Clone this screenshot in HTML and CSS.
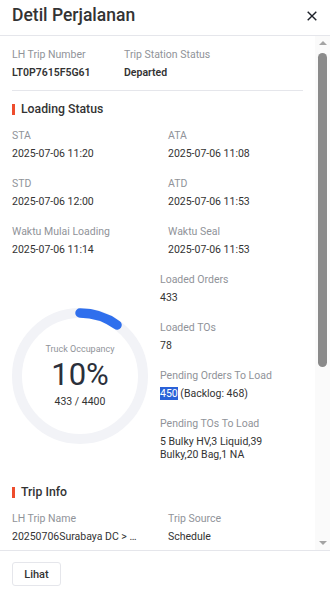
FILE: index.html
```html
<!DOCTYPE html>
<html lang="en">
<head>
  <meta charset="UTF-8">
  <meta name="viewport" content="width=device-width, initial-scale=1.0">
  <title>Detil Perjalanan</title>
  <link rel="stylesheet" href="styles.css">
</head>
<body>

  <div class="drawer">
    <!-- Header -->
    <div class="drawer-header">
      <span class="drawer-title">Detil Perjalanan</span>
      <svg class="close-icon" width="10" height="10" viewBox="0 0 10 10">
        <path d="M0.7 0.7 L9.3 9.3 M9.3 0.7 L0.7 9.3" stroke="#1d2129" stroke-width="1.4" fill="none"/>
      </svg>
    </div>

    <!-- Body with its scrollbar -->
    <div class="drawer-main">
      <div class="drawer-body">
        <div class="trip-top">
          <div class="field first">
            <div class="label">LH Trip Number</div>
            <div class="value bold">LT0P7615F5G61</div>
          </div>
          <div class="field">
            <div class="label">Trip Station Status</div>
            <div class="value bold">Departed</div>
          </div>
        </div>

        <div class="section-title">Loading Status</div>
        <div class="grid">
          <div class="field">
            <div class="label">STA</div>
            <div class="value">2025-07-06 11:20</div>
          </div>
          <div class="field">
            <div class="label">ATA</div>
            <div class="value">2025-07-06 11:08</div>
          </div>
          <div class="field">
            <div class="label">STD</div>
            <div class="value">2025-07-06 12:00</div>
          </div>
          <div class="field">
            <div class="label">ATD</div>
            <div class="value">2025-07-06 11:53</div>
          </div>
          <div class="field">
            <div class="label">Waktu Mulai Loading</div>
            <div class="value">2025-07-06 11:14</div>
          </div>
          <div class="field">
            <div class="label">Waktu Seal</div>
            <div class="value">2025-07-06 11:53</div>
          </div>
        </div>

        <div class="occupancy">
          <div class="gauge">
            <svg width="136" height="136" viewBox="0 0 136 136">
              <circle cx="68" cy="68" r="63" fill="none" stroke="#f2f3f7" stroke-width="10"/>
              <!-- 10% arc, starting at the top -->
              <path d="M68 5 A63 63 0 0 1 105.03 17.03" fill="none" stroke="#2f6fed" stroke-width="9.5" stroke-linecap="round"/>
            </svg>
            <div class="gauge-text">
              <div class="gauge-label">Truck Occupancy</div>
              <div class="gauge-percent">10%</div>
              <div class="gauge-count">433 / 4400</div>
            </div>
          </div>
          <div class="occupancy-info">
            <div class="field">
              <div class="label">Loaded Orders</div>
              <div class="value">433</div>
            </div>
            <div class="field">
              <div class="label">Loaded TOs</div>
              <div class="value">78</div>
            </div>
            <div class="field">
              <div class="label">Pending Orders To Load</div>
              <div class="value"><span class="selected">450</span> (Backlog: 468)</div>
            </div>
            <div class="field">
              <div class="label">Pending TOs To Load</div>
              <div class="value multi">5 Bulky HV,3 Liquid,39 Bulky,20 Bag,1 NA</div>
            </div>
          </div>
        </div>

        <div class="section-title">Trip Info</div>
        <div class="grid">
          <div class="field">
            <div class="label">LH Trip Name</div>
            <div class="value ellipsis">20250706Surabaya DC &gt; Jakarta DC</div>
          </div>
          <div class="field">
            <div class="label">Trip Source</div>
            <div class="value">Schedule</div>
          </div>
        </div>
      </div>

      <div class="scrollbar">
        <span class="scroll-arrow up"></span>
        <div class="scroll-track">
          <div class="scroll-thumb"></div>
        </div>
        <span class="scroll-arrow down"></span>
      </div>
    </div>

    <!-- Footer -->
    <div class="drawer-footer">
      <button class="btn">Lihat</button>
    </div>
  </div>

</body>
</html>
```

FILE: styles.css
```css
body {
  margin: 0;
  background-color: #ffffff;
  font-family: Roboto, "Noto Sans", sans-serif;
  color: #333333;
}

.drawer {
  height: 596px;
  display: flex;
  flex-direction: column;
}

.drawer-header {
  height: 35px;
  flex-shrink: 0;
  display: flex;
  justify-content: space-between;
  align-items: center;
  padding: 0 12px;
  border-bottom: 1px solid #e5e6eb;
}

.drawer-title {
  font-size: 17.5px;
  font-weight: 500;
  color: #333333;
  margin-top: -5px;
}

.close-icon {
  margin-right: 1px;
  margin-top: -4px;
}

.drawer-main {
  flex: 1;
  min-height: 0;
  display: flex;
}

.drawer-body {
  flex: 1;
  overflow: hidden;
  padding: 10px 12px 0 12px;
}

/* Scrollbar column on the right */
.scrollbar {
  width: 15px;
  flex-shrink: 0;
  background-color: #fafafa;
  display: flex;
  flex-direction: column;
  align-items: center;
  padding: 5px 0;
}

.scroll-arrow {
  width: 0;
  height: 0;
  border-left: 4px solid transparent;
  border-right: 4px solid transparent;
}

.scroll-arrow.up {
  border-bottom: 4px solid #a3a3a3;
}

.scroll-arrow.down {
  border-top: 4px solid #a3a3a3;
}

.scroll-track {
  flex: 1;
  width: 100%;
  padding: 8px 0 0 0;
  display: flex;
  justify-content: center;
}

.scroll-thumb {
  width: 9px;
  height: 314px;
  border-radius: 5px;
  background-color: #8a8a8a;
}

.drawer-footer {
  flex-shrink: 0;
  border-top: 1px solid #e5e6eb;
  padding: 11px 12px 10px 12px;
}

.btn {
  height: 24px;
  width: 49px;
  padding: 0;
  font-family: Roboto, sans-serif;
  font-size: 11px;
  font-weight: 500;
  color: #333333;
  background-color: #ffffff;
  border: 1px solid #e5e6eb;
  border-radius: 3px;
}

/* Fields */
.label {
  font-size: 10.5px;
  line-height: 18px;
  color: #909399;
}

.value {
  font-size: 10.5px;
  line-height: 18px;
  color: #333333;
}

.value.bold {
  font-weight: 600;
}

.value.multi {
  line-height: 13px;
  margin-top: 2px;
}

.value.ellipsis {
  width: 126px;
  white-space: nowrap;
  overflow: hidden;
  text-overflow: ellipsis;
}

.selected {
  background-color: #2b62d8;
  color: #ffffff;
}

.trip-top {
  display: flex;
  padding-bottom: 8px;
  border-bottom: 1px solid #e5e6eb;
}

.trip-top .first {
  width: 112px;
}

.section-title {
  display: flex;
  align-items: center;
  gap: 6px;
  font-size: 12.25px;
  font-weight: 500;
  line-height: 20px;
  color: #333333;
  margin-top: 8px;
  margin-bottom: 8px;
}

.section-title::before {
  content: "";
  width: 3px;
  height: 11px;
  background-color: #ee4d2d;
}

.grid {
  display: grid;
  grid-template-columns: 135px 135px;
  column-gap: 21px;
  row-gap: 12px;
}

/* Occupancy */
.occupancy {
  display: flex;
  align-items: flex-start;
  gap: 12px;
  margin-top: 12px;
}

.gauge {
  position: relative;
  width: 136px;
  height: 136px;
  margin-top: 37px;
}

.gauge svg {
  display: block;
}

.gauge-text {
  position: absolute;
  inset: 0;
  display: flex;
  flex-direction: column;
  align-items: center;
  justify-content: center;
}

.gauge-label {
  font-size: 9px;
  color: #909399;
  line-height: 14px;
}

.gauge-percent {
  font-size: 31px;
  line-height: 38px;
  color: #2b303b;
}

.gauge-count {
  font-size: 10.5px;
  line-height: 16px;
  color: #333333;
}

.occupancy-info {
  width: 120px;
  display: flex;
  flex-direction: column;
  gap: 12px;
}

.occupancy + .section-title {
  margin-top: 21px;
}
```
